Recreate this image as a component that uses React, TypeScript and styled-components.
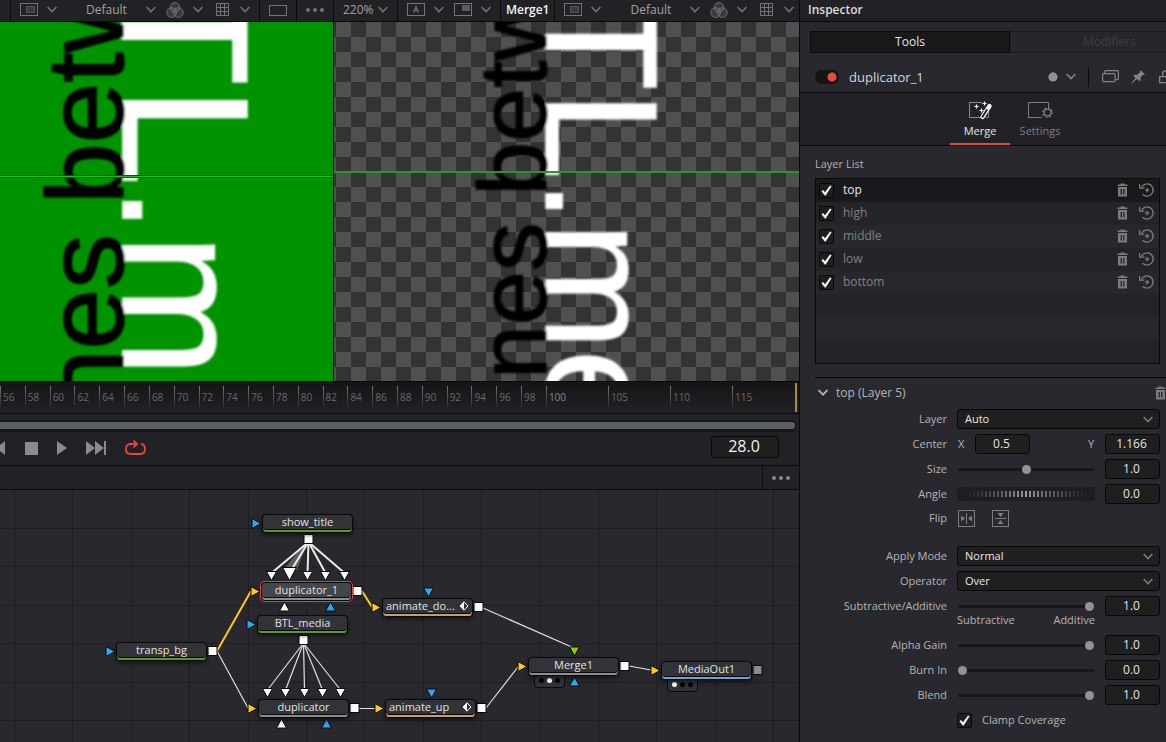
import React from "react";
import styled, { createGlobalStyle, css } from "styled-components";

const GlobalStyle = createGlobalStyle`
  *, *::before, *::after { box-sizing: border-box; }
  html, body { margin: 0; padding: 0; background: #28282e; }
  body {
    font-family: "Open Sans", "Noto Sans", sans-serif;
    font-size: 12px;
    line-height: 16px;
    color: #b4b4b6;
    overflow: hidden;
  }
  button, input, select { font: inherit; color: inherit; margin: 0; padding: 0; border: 0; background: none; }
  h1, h2, h3, p, ul { margin: 0; padding: 0; font: inherit; list-style: none; }
  svg { display: block; flex: none; }
`;

const line = "#0a0a0c";
const barBg = "#212126";

/* ---------- page ---------- */

const Page = styled.div`
  display: flex;
  height: 100vh;
`;
const Workspace = styled.main`
  flex: 1;
  min-width: 0;
  display: flex;
  flex-direction: column;
  background: ${barBg};
  border-right: 1px solid ${line};
`;

/* ---------- viewers ---------- */

const Viewers = styled.div`
  flex: 381 1 0;
  min-height: 0;
  display: grid;
  grid-template-columns: 5fr 7fr;
  border-bottom: 1px solid ${line};
`;
const Viewer = styled.section<{ $divided?: boolean }>`
  min-width: 0;
  display: flex;
  flex-direction: column;
  overflow: hidden;
  border-left: ${(p) => (p.$divided ? `1px solid ${line}` : "0")};
`;
const Toolbar = styled.div`
  display: flex;
  flex: none;
  height: 22px;
  background: ${barBg};
  border-bottom: 1px solid ${line};
  color: #a2a2a4;
`;
const Group = styled.div<{ $pad?: number; $grow?: boolean; $last?: boolean }>`
  display: flex;
  align-items: center;
  justify-content: ${(p) => (p.$grow ? "center" : "flex-start")};
  flex: ${(p) => (p.$grow ? "1" : "none")};
  gap: 10px;
  padding: 0 ${(p) => p.$pad ?? 9}px 2px;
  border-right: ${(p) => (p.$last ? "0" : `1px solid ${line}`)};
`;
const IconButton = styled.button`
  display: flex;
  align-items: center;
  gap: 9px;
  color: #747476;
`;
const ViewName = styled.span`
  font-weight: 600;
  color: #f6f6f6;
`;
const PickBox = styled.span<{ $w: number; $indent?: boolean }>`
  display: grid;
  align-items: center;
  width: ${(p) => p.$w}px;
  margin-left: ${(p) => (p.$indent ? 19 : 0)}px;
  select { grid-area: 1 / 1; appearance: none; outline: none; height: 18px; }
  svg { grid-area: 1 / 1; justify-self: end; pointer-events: none; color: #747476; }
`;
const Screen = styled.div<{ $checker?: boolean }>`
  flex: 1;
  min-height: 0;
  overflow: hidden;
  background: #009300;
  ${(p) =>
    p.$checker &&
    css`
      background: conic-gradient(#333 25%, #505050 0 50%, #333 0 75%, #505050 0) 2px 0 / 30px 30px;
    `}
`;
const Picture = styled.svg`
  width: 100%;
  height: 100%;
  font-family: "Liberation Sans", Arial, sans-serif;
`;

/* ---------- timeline ---------- */

const Ruler = styled.div`
  position: relative;
  display: flex;
  flex: none;
  height: 32px;
  padding-top: 4px;
  background: linear-gradient(#151517, #222226);
  border-bottom: 1px solid ${line};
  overflow: hidden;
`;
const Tick = styled.div<{ $span: number; $lit?: boolean }>`
  flex: ${(p) => p.$span} 0 0;
  min-width: 0;
  display: flex;
  gap: 2px;
  font-size: 10px;
  line-height: 22px;
  color: ${(p) => (p.$lit ? "#8a8a8c" : "#68686a")};
  &::before {
    content: "";
    width: 1px;
    height: 23px;
    background: linear-gradient(#77777a, #222226);
  }
`;
const EndMark = styled.i`
  position: absolute;
  right: 2px;
  top: 1px;
  width: 2px;
  height: 29px;
  background: #b58a22;
`;
const ScrollTrack = styled.div`
  flex: none;
  margin: 6px 2px 0 0;
  height: 12px;
  padding: 2px 2px 3px 0;
  background: #161718;
  border-radius: 0 6px 6px 0;
`;
const ScrollThumb = styled.div`
  height: 7px;
  border-radius: 0 4px 4px 0;
  background: #5b6067;
`;
const Transport = styled.div`
  display: flex;
  align-items: center;
  flex: none;
  height: 34px;
  padding: 0 20px 1px 0;
  border-bottom: 1px solid ${line};
  color: #8b8b8b;
`;
const TransportButtons = styled.div`
  display: flex;
  align-items: center;
  gap: 19px;
  flex: 1;
  button { display: block; }
`;
const FrameBox = styled.input`
  width: 68px;
  height: 22px;
  margin-bottom: 2px;
  padding: 0 2px 2px 0;
  border: 1px solid #08080a;
  border-radius: 3px;
  background: #1f1f1f;
  color: #f0f0f0;
  font-size: 16px;
  text-align: center;
`;

/* ---------- node editor ---------- */

const NodeBar = styled.div`
  display: flex;
  justify-content: flex-end;
  flex: none;
  height: 24px;
  border-bottom: 1px solid ${line};
`;
const NodeMenu = styled.button`
  width: 37px;
  border-left: 1px solid ${line};
  display: grid;
  place-items: center;
  color: #8a8a8c;
`;
const Canvas = styled.section`
  position: relative;
  flex: 252 1 0;
  min-height: 0;
  overflow: hidden;
  background: #28282d;
`;
const Wires = styled.svg`
  width: 100%;
  height: 100%;
`;
const Node = styled.div<{ $x: number; $y: number; $stripe: string; $selected?: boolean; $keyed?: boolean }>`
  position: absolute;
  left: ${(p) => p.$x}px;
  top: ${(p) => p.$y}px;
  width: 91px;
  height: 19px;
  display: flex;
  align-items: center;
  justify-content: ${(p) => (p.$keyed ? "space-between" : "center")};
  padding: 0 3px 5px;
  border: 1px solid ${line};
  border-bottom: 0;
  border-radius: 4px;
  background: ${(p) => (p.$selected ? "#43464b" : "#313338")};
  box-shadow: ${(p) => (p.$selected ? "0 0 0 1px #d9483c" : "0 2px 4px #0008")},
    inset 0 -1px 0 ${line}, inset 0 -3px 0 ${(p) => p.$stripe}, inset 0 -4px 0 ${line};
  font-size: 11px;
  line-height: 14px;
  color: #e2e2e2;
`;
const ViewDots = styled.div<{ $x: number; $y: number }>`
  position: absolute;
  left: ${(p) => p.$x}px;
  top: ${(p) => p.$y}px;
  display: flex;
  gap: 3px;
  padding: 3px 4px 4px;
  border: 1px solid ${line};
  border-top: 0;
  border-radius: 0 0 4px 4px;
  background: #303237;
`;
const ViewDot = styled.i<{ $on?: boolean }>`
  width: 5px;
  height: 5px;
  border-radius: 50%;
  background: ${(p) => (p.$on ? "#fff" : "#000")};
`;

/* ---------- inspector ---------- */

const Inspector = styled.aside`
  width: 366px;
  flex: none;
  overflow: hidden;
  background: #28282e;
`;
const Wide = styled.div`
  width: 420px;
`;
const Title = styled.h1`
  height: 22px;
  padding: 2px 8px 0;
  background: ${barBg};
  border-bottom: 1px solid ${line};
  color: #dcdcdc;
  font-weight: 600;
`;
const Modes = styled.div`
  display: grid;
  grid-template-columns: 1fr 1fr;
  padding: 9px 10px 0;
`;
const Mode = styled.button<{ $on?: boolean }>`
  height: 22px;
  border: 1px solid ${(p) => (p.$on ? line : "#1b1b1f")};
  border-left-width: ${(p) => (p.$on ? 1 : 0)}px;
  background: ${(p) => (p.$on ? "#18191b" : "#26262b")};
  color: ${(p) => (p.$on ? "#e4e4e4" : "#3f3f43")};
`;
const ToolHead = styled.div`
  display: flex;
  align-items: center;
  height: 40px;
  padding: 8px 0 0 15px;
  border-bottom: 1px solid ${line};
  color: #848486;
`;
const Switch = styled.input`
  appearance: none;
  width: 24px;
  height: 14px;
  border-radius: 7px;
  background: #151517 radial-gradient(circle at 17px 7px, #ea4b3d 0 4px, transparent 5px);
`;
const ToolName = styled.h2`
  flex: 1;
  padding-left: 10px;
  font-size: 13px;
  color: #d6d6d6;
`;
const HeadTools = styled.div`
  display: flex;
  align-items: center;
  width: 173px;
  height: 20px;
  button { display: block; }
`;
const Version = styled.button`
  && { display: flex; }
  align-items: center;
  gap: 7px;
  padding-right: 12px;
  margin-right: 13px;
  height: 20px;
  border-right: 1px solid ${line};
`;
const HeadIcons = styled.div`
  display: flex;
  gap: 12px;
`;
const Tabs = styled.div`
  display: flex;
  justify-content: center;
  height: 53px;
  background: #222226;
  border-bottom: 1px solid ${line};
`;
const Tab = styled.button<{ $on?: boolean }>`
  display: flex;
  flex-direction: column;
  align-items: center;
  justify-content: flex-end;
  gap: 3px;
  width: 60px;
  padding-bottom: 4px;
  border-bottom: 2px solid ${(p) => (p.$on ? "#e5483a" : "transparent")};
  font-size: 11px;
  color: ${(p) => (p.$on ? "#e6e6e6" : "#7e7e80")};
`;
const Body = styled.div`
  padding: 10px 6px 0 15px;
`;
const ListTitle = styled.h3`
  font-size: 11px;
  margin-bottom: 6px;
`;
const Layers = styled.ul`
  border: 1px solid ${line};
`;
const LayerRow = styled.li<{ $on?: boolean }>`
  display: flex;
  align-items: center;
  height: 23px;
  padding: 0 5px 0 3px;
  background: ${(p) => (p.$on ? "#18191b" : "#28282c")};
  color: ${(p) => (p.$on ? "#e8e8e8" : "#808082")};
  &:nth-child(even) { background: #242428; }
`;
const LayerLabel = styled.label`
  display: flex;
  align-items: center;
  gap: 9px;
  flex: 1;
`;
const LayerName = styled.span`
  padding-bottom: 2px;
`;
const LayerTools = styled.span`
  display: flex;
  align-items: center;
  gap: 11px;
  padding-bottom: 2px;
  color: #7c7c7e;
`;
const Check = styled.span`
  display: grid;
  place-items: center;
  width: 15px;
  height: 15px;
  input {
    grid-area: 1 / 1;
    appearance: none;
    width: 15px;
    height: 15px;
    border: 1px solid #08080a;
    border-radius: 2px;
    background: #1f1f1f;
  }
  svg { grid-area: 1 / 1; pointer-events: none; }
`;
const SectionHead = styled.div`
  display: flex;
  align-items: center;
  justify-content: space-between;
  height: 32px;
  margin: 13px -6px 0 0;
  padding-bottom: 2px;
  border-top: 1px solid ${line};
  color: #7c7c7e;
`;
const SectionToggle = styled.button`
  display: flex;
  align-items: center;
  gap: 8px;
  padding-left: 3px;
  color: #b4b4b6;
`;
const Field = styled.div<{ $gap?: number }>`
  display: grid;
  grid-template-columns: 1fr 138px 55px;
  align-items: center;
  column-gap: 10px;
  height: 20px;
  margin-bottom: ${(p) => p.$gap ?? 5}px;
  font-size: 11px;
`;
const FieldLabel = styled.label`
  text-align: right;
`;
const Value = styled.input`
  width: 55px;
  height: 20px;
  padding: 0 2px 2px 0;
  border: 1px solid #08080a;
  border-radius: 3px;
  background: #1f1f1f;
  color: #e4e4e4;
  font-size: 12px;
  text-align: center;
`;
const Combo = styled.div`
  grid-column: 2 / 4;
  display: grid;
  align-items: center;
  select {
    grid-area: 1 / 1;
    appearance: none;
    height: 20px;
    padding: 0 7px;
    border: 1px solid #08080a;
    border-radius: 3px;
    background: #1f1f1f;
    color: #e8e8e8;
  }
  svg { grid-area: 1 / 1; justify-self: end; margin-right: 7px; pointer-events: none; color: #7c7c7e; }
`;
const Slider = styled.input`
  appearance: none;
  height: 9px;
  margin: 0 1px;
  background: linear-gradient(#17181a, #17181a) center / 100% 3px no-repeat;
  &::-webkit-slider-thumb {
    appearance: none;
    width: 9px;
    height: 9px;
    border-radius: 50%;
    background: #939393;
  }
`;
const Axes = styled.div`
  display: flex;
  align-items: center;
  gap: 10px;
  padding-left: 1px;
`;
const AxisLabel = styled.label<{ $end?: boolean }>`
  width: 7px;
  margin-left: ${(p) => (p.$end ? "auto" : "0")};
`;
const Flips = styled.div`
  display: flex;
  gap: 17px;
  padding-left: 1px;
  color: #7e7e80;
`;
const Ends = styled.div`
  grid-column: 2;
  display: flex;
  justify-content: space-between;
`;
const Clamp = styled.label`
  display: flex;
  align-items: center;
  gap: 10px;
  padding-left: 142px;
  margin-top: 7px;
  font-size: 11px;
`;

/* ---------- icons ---------- */

const Chevron = ({ s = 1.5 }: { s?: number }) => (
  <svg width="10" height="7" viewBox="0 0 10 7" fill="none" stroke="currentColor" strokeWidth={s}>
    <path d="M.6 1 5 5.6 9.4 1" />
  </svg>
);
const Dots = () => (
  <svg width="18" height="4" viewBox="0 0 18 4" fill="currentColor">
    <circle cx="2" cy="2" r="2" /><circle cx="9" cy="2" r="2" /><circle cx="16" cy="2" r="2" />
  </svg>
);
const Frame = ({ children, y = 0.5, h = 12 }: { children?: React.ReactNode; y?: number; h?: number }) => (
  <svg width="18" height="13" viewBox="0 0 18 13" fill="none" stroke="currentColor">
    <rect x=".5" y={y} width="17" height={h} />
    {children}
  </svg>
);
const Roi = () => (
  <Frame>
    <rect x="6" y="3" width="9" height="7" fill="#3a3a3d" stroke="none" />
    <rect x="6.5" y="3.5" width="8" height="6" strokeDasharray="1 1" />
  </Frame>
);
const BufferA = () => (
  <Frame>
    <path d="m6.5 9.500 2.500-6 2.500 6M7.500 7.500h3" strokeWidth="1.2" />
  </Frame>
);
const SubView = () => (
  <Frame>
    <rect x="8" y="2" width="8" height="6" fill="#5c5c5f" stroke="none" />
  </Frame>
);
const Rgb = () => (
  <svg width="18" height="16" viewBox="0 0 18 16" fill="currentColor" fillOpacity=".3" stroke="currentColor" strokeWidth=".9">
    <circle cx="9" cy="5.3" r="4.8" /><circle cx="5.6" cy="10.6" r="4.8" /><circle cx="12.4" cy="10.6" r="4.8" />
  </svg>
);
const GridIcon = () => (
  <svg width="18" height="13" viewBox="0 0 18 13" fill="none" stroke="currentColor">
    <path d="M3.5.5h12v12h-12zM7.5.5v12M11.5.5v12M3.5 4.5h12M3.5 8.5h12" />
  </svg>
);
const Trash = () => (
  <svg width="11" height="14" viewBox="0 0 11 14" fill="currentColor">
    <path fillRule="evenodd" d="M.5 1.500h3V.500h4v1h3V3H.5zM1 4h9v9.500H1zm2.600 2v5.500h1.300V6zm2.600 0v5.500h1.300V6z" />
  </svg>
);
const Reset = () => (
  <svg width="15" height="14" viewBox="0 0 15 14" fill="none" stroke="currentColor" strokeWidth="1.4">
    <path d="M2.600 4.200A6.100 6.100 0 1 1 3.600 11.200" />
    <path d="M.6 1v4.200h4.800M8.200 5v4.200M6.100 7.100h4.200" strokeWidth="1.300" />
  </svg>
);
const Tickmark = () => (
  <svg width="11" height="11" viewBox="0 0 11 11" fill="#f4f4f4">
    <path d="M.5 6.200 2 5l2 2.300L9 .6l1.600.6L4.700 10.400H3.800z" />
  </svg>
);
const Square = ({ x, y, fill = "#fff" }: { x: number; y: number; fill?: string }) => (
  <rect x={x - 4.5} y={y - 4.5} width="9" height="9" fill={fill} stroke="#08080a" />
);
type Dir = "r" | "d" | "u";
const Arrow = ({ x, y, dir, fill, big }: { x: number; y: number; dir: Dir; fill: string; big?: boolean }) => {
  const a = big ? 7 : 5;
  const b = big ? 6 : 4;
  const pts =
    dir === "r"
      ? `${x - 4},${y - 5} ${x + 5},${y} ${x - 4},${y + 5}`
      : dir === "d"
        ? `${x - a},${y - b} ${x + a},${y - b} ${x},${y + b + 1}`
        : `${x - a},${y + b} ${x + a},${y + b} ${x},${y - b - 1}`;
  return <polygon points={pts} fill={fill} stroke="#08080a" />;
};
const Keyframe = () => (
  <svg width="10" height="10" viewBox="0 0 10 10">
    <path d="M5 .8v8.400L1 5z" fill="#fff" />
    <path d="M5 .8 9 5 5 9.200 1 5z" fill="none" stroke="#fff" />
  </svg>
);

/* ---------- parts ---------- */

const Pick = ({ label, value, w, indent }: { label: string; value: string; w: number; indent?: boolean }) => (
  <PickBox $w={w} $indent={indent}>
    <select aria-label={label} defaultValue={value}><option>{value}</option></select>
    <Chevron />
  </PickBox>
);
const ToolMenu = ({ label, icon }: { label: string; icon: React.ReactNode }) => (
  <IconButton aria-label={label}>{icon}<Chevron /></IconButton>
);
const ViewTools = ({ last }: { last?: boolean }) => (
  <Group $last={last}>
    <ToolMenu label="Region of interest" icon={<Roi />} />
    <Pick label="View layout" value="Default" w={70} indent />
    <ToolMenu label="Channels" icon={<Rgb />} />
    <ToolMenu label="Guides" icon={<GridIcon />} />
  </Group>
);
const CheckBox = () => (
  <Check><input type="checkbox" defaultChecked /><Tickmark /></Check>
);
const SelectField = ({ id, label, value, gap }: { id: string; label: string; value: string; gap?: number }) => (
  <Field $gap={gap}>
    <FieldLabel htmlFor={id}>{label}</FieldLabel>
    <Combo><select id={id} defaultValue={value}><option>{value}</option></select><Chevron /></Combo>
  </Field>
);
const SliderField = ({ id, label, value, at, gap }: { id: string; label: string; value: string; at: number; gap?: number }) => (
  <Field $gap={gap}>
    <FieldLabel htmlFor={id}>{label}</FieldLabel>
    <Slider id={id} type="range" min={0} max={100} defaultValue={at} />
    <Value aria-label={`${label} value`} defaultValue={value} />
  </Field>
);
const Wheel = () => (
  <svg width="138" height="14" viewBox="0 0 138 14" role="img" aria-label="Angle wheel">
    <defs>
      <linearGradient id="wheel"><stop stopColor="#1c1d1f" /><stop offset=".5" stopColor="#202123" /><stop offset="1" stopColor="#1c1d1f" /></linearGradient>
    </defs>
    <rect width="138" height="14" fill="url(#wheel)" />
    {Array.from({ length: 33 }, (_, i) => {
      const d = Math.abs(i - 16) / 16;
      return <rect key={i} x={4 + i * 4} y="4" width="2" height="6" fill="#9a9a9a" opacity={Math.max(0.03, Math.pow(1 - d, 1.3))} />;
    })}
  </svg>
);

const ticks = Array.from({ length: 22 }, (_, i) => 56 + i * 2);
const nodes = [
  { name: "show_title", x: 262, y: 24, stripe: "#5c9a20" },
  { name: "duplicator_1", x: 261, y: 92, stripe: "#8e8e8e", selected: true },
  { name: "BTL_media", x: 257, y: 125, stripe: "#5c9a20" },
  { name: "transp_bg", x: 116, y: 152, stripe: "#5c9a20" },
  { name: "duplicator", x: 258, y: 209, stripe: "#8e8e8e" },
  { name: "animate_do...", x: 382, y: 108, stripe: "#c9a06c", keyed: true },
  { name: "animate_up", x: 385, y: 209, stripe: "#c9a06c", keyed: true },
  { name: "Merge1", x: 528, y: 167, stripe: "#8e8e8e" },
  { name: "MediaOut1", x: 661, y: 171, stripe: "#6ea3d4" },
];
const blue = "#27aaf5";
const yellow = "#fdc818";
const topInputs = [271.5, 289.5, 307.5, 325.5, 344.5];
const lowInputs = [267.5, 285.5, 304.5, 322.5, 340.5];
const layers = ["top", "high", "middle", "low", "bottom", "", "", ""];

export default function App() {
  return (
    <Page>
      <GlobalStyle />
      <Workspace>
        <Viewers>
          <Viewer>
            <Toolbar>
              <Group $pad={5} />
              <ViewTools />
              <Group><IconButton aria-label="Single view"><Frame y={2.5} h={10} /></IconButton></Group>
              <Group $grow $last $pad={0}><IconButton aria-label="Viewer options"><Dots /></IconButton></Group>
            </Toolbar>
            <Screen>
              <Picture>
                <defs><filter id="soft"><feGaussianBlur stdDeviation=".8" /></filter></defs>
                <g filter="url(#soft)" strokeWidth="1.5">
                  <text transform="translate(123 -46) rotate(90)" fontSize="180" fill="#fff" stroke="#fff">
                    TL<tspan fontSize="172">.m</tspan>
                  </text>
                  <text transform="translate(123 388) rotate(-90)" fontSize="109" stroke="#000">nes betw</text>
                </g>
                <path d="M0 153.500h2000M0 155.500h2000" stroke="#005c00" />
                <path d="M0 154.500h2000" stroke="#16c416" />
              </Picture>
            </Screen>
          </Viewer>
          <Viewer $divided>
            <Toolbar>
              <Group><Pick label="Zoom" value="220%" w={45} /></Group>
              <Group>
                <ToolMenu label="Buffer A" icon={<BufferA />} />
                <ToolMenu label="Sub view" icon={<SubView />} />
              </Group>
              <Group $pad={5}><ViewName>Merge1</ViewName></Group>
              <ViewTools last />
            </Toolbar>
            <Screen $checker>
              <Picture>
                <g filter="url(#soft)" strokeWidth="1.3">
                  <text transform="translate(212 -29) rotate(90)" fontSize="160" fill="#fff" stroke="#fff">
                    TL<tspan fontSize="153">.me</tspan>
                  </text>
                  <text transform="translate(212 357) rotate(-90)" fontSize="97" stroke="#000">nes betw</text>
                </g>
                <path d="M0 150h2000" stroke="#249a24" strokeWidth="2" />
              </Picture>
            </Screen>
          </Viewer>
        </Viewers>

        <Ruler>
          {ticks.map((t) => <Tick key={t} $span={20}>{t}</Tick>)}
          <Tick $span={50} $lit>100</Tick>
          <Tick $span={50}>105</Tick>
          <Tick $span={50}>110</Tick>
          <Tick $span={54}>115</Tick>
          <EndMark />
        </Ruler>
        <ScrollTrack><ScrollThumb /></ScrollTrack>
        <Transport>
          <TransportButtons>
            <button aria-label="Play reverse"><svg width="6" height="14" fill="currentColor"><path d="M5 0v14L-4 7z" /></svg></button>
            <button aria-label="Stop"><svg width="13" height="13" fill="currentColor"><path d="M0 0h13v13H0z" /></svg></button>
            <button aria-label="Play"><svg width="10" height="14" fill="currentColor"><path d="M0 0v14l10-7z" /></svg></button>
            <button aria-label="Last frame"><svg width="20" height="14" fill="currentColor"><path d="M0 0v14l9-7zM9 0v14l9-7zM18 0h2v14h-2z" /></svg></button>
            <button aria-label="Loop">
              <svg width="21" height="16" viewBox="0 0 21 16" fill="none" stroke="#e5483a" strokeWidth="1.800">
                <path d="M5.500 4C2.600 4 1 6 1 9s1.600 5 4.500 5h10c2.900 0 4.500-2 4.500-5s-1.400-4.800-4-5M4.500 4h7.500M8.500.6 12 4 8.500 7.400" />
              </svg>
            </button>
          </TransportButtons>
          <FrameBox aria-label="Current frame" defaultValue="28.0" />
        </Transport>
        <NodeBar><NodeMenu aria-label="Node options"><Dots /></NodeMenu></NodeBar>

        <Canvas>
          <Wires>
            <g stroke="#1f1f23">
              {Array.from({ length: 30 }, (_, i) => Math.round(14 + i * 58.4) + 0.5).map((x) => <path key={x} d={`M${x} 0v2000`} />)}
              {Array.from({ length: 30 }, (_, i) => Math.round(38 + i * 38.4) + 0.5).map((y) => <path key={y} d={`M0 ${y}h3000`} />)}
            </g>
            <path d="M308 50 283 80h14z" fill="#fff" opacity=".25" />
            <g stroke="#ececec" strokeWidth="2">
              {topInputs.map((x) => <path key={x} d={`M308.500 52 ${x} 83`} />)}
            </g>
            <g stroke="#e0e0e0" strokeWidth="1.200" fill="none">
              {lowInputs.map((x) => <path key={x} d={`M303.500 153 ${x} 200`} />)}
              <path d="m217 161 31 57M358 218.500h18M483 118l91 40M486 218l32-41M629 176l22 4" />
            </g>
            <path d="m217 161 34-60M362 101l10 16" stroke={yellow} strokeWidth="2" />
            {topInputs.map((x, i) => <Arrow key={x} x={x} y={i === 1 ? 83.5 : 85.5} dir="d" fill="#fff" big={i === 1} />)}
            {lowInputs.map((x) => <Arrow key={x} x={x} y={202.5} dir="d" fill="#fff" />)}
            <Arrow x={284.5} y={117} dir="u" fill="#fff" />
            <Arrow x={330.5} y={117} dir="u" fill={blue} />
            <Arrow x={281.5} y={234} dir="u" fill="#fff" />
            <Arrow x={326.5} y={234} dir="u" fill={blue} />
            <Arrow x={428.5} y={102} dir="d" fill={blue} />
            <Arrow x={431.5} y={203} dir="d" fill={blue} />
            <Arrow x={574.5} y={161} dir="d" fill="#8ccc00" />
            <Arrow x={574.5} y={192} dir="u" fill={blue} />
            <Arrow x={256} y={33.5} dir="r" fill={blue} />
            <Arrow x={251} y={134.5} dir="r" fill={blue} />
            <Arrow x={110} y={161.5} dir="r" fill={blue} />
            <Arrow x={255} y={101.5} dir="r" fill={yellow} />
            <Arrow x={376} y={117.5} dir="r" fill={yellow} />
            <Arrow x={252} y={218.5} dir="r" fill={yellow} />
            <Arrow x={379} y={218.5} dir="r" fill={yellow} />
            <Arrow x={522} y={176.5} dir="r" fill={yellow} />
            <Arrow x={655} y={180.5} dir="r" fill={yellow} />
            <Square x={308.5} y={49} /><Square x={357.5} y={101} /><Square x={303.5} y={150} />
            <Square x={212.5} y={161} /><Square x={354.5} y={218} /><Square x={478.5} y={117} />
            <Square x={481.5} y={218} /><Square x={624.5} y={176} />
            <Square x={757.5} y={180} fill="#8c8c8c" />
          </Wires>
          <ViewDots $x={534} $y={185}><ViewDot /><ViewDot $on /><ViewDot /></ViewDots>
          <ViewDots $x={667} $y={189}><ViewDot $on /><ViewDot /><ViewDot /></ViewDots>
          {nodes.map((n) => (
            <Node key={n.name} $x={n.x} $y={n.y} $stripe={n.stripe} $selected={n.selected} $keyed={n.keyed}>
              {n.name}
              {n.keyed && <Keyframe />}
            </Node>
          ))}
        </Canvas>
      </Workspace>

      <Inspector>
        <Title>Inspector</Title>
        <Wide>
          <Modes><Mode $on>Tools</Mode><Mode>Modifiers</Mode></Modes>
          <ToolHead>
            <Switch type="checkbox" defaultChecked aria-label="Enable duplicator_1" />
            <ToolName>duplicator_1</ToolName>
            <HeadTools>
              <Version aria-label="Versions">
                <svg width="12" height="12"><circle cx="6" cy="6" r="5.500" fill="#1b1b1e" /><circle cx="6" cy="6" r="4.700" fill="#929292" /></svg>
                <Chevron />
              </Version>
              <HeadIcons>
                <button aria-label="Copy"><svg width="17" height="13" viewBox="0 0 17 13" fill="none" stroke="currentColor" strokeWidth="1.200"><rect x=".6" y="3.600" width="12.500" height="8" rx="1" /><path d="M2.600 3.400V1.600q0-1 1-1h11.800q1 0 1 1v7q0 1-1 1h-2" /></svg></button>
                <button aria-label="Pin"><svg width="15" height="14" viewBox="0 0 15 14" fill="currentColor"><path d="M9.600.2 14 4.400l-1.300.6-.7-.2-2.500 2.600.2 2.700-1.100 1.200-2.500-2.400L.6 13.600l-.5-.4L4.600 8 2.400 5.800l1.100-1.100 2.900.1L9 2.200 8.900 1.300z" /></svg></button>
                <button aria-label="Lock"><svg width="14" height="14" viewBox="0 0 14 14" fill="none" stroke="currentColor" strokeWidth="1.300"><path d="M1.600 6.600h10v6h-10zM4.600 6.600V3.400a2.500 2.500 0 0 1 5 0" /></svg></button>
              </HeadIcons>
            </HeadTools>
          </ToolHead>
          <Tabs>
            <Tab $on>
              <svg width="24" height="20" viewBox="0 0 24 20" fill="none">
                <path d="M14 2.500H1.500v15h12M20.500 10v7.500h-3" stroke="#8a8a8c" />
                <path d="m14.500 17 7-11" stroke="#fff" strokeWidth="4.200" strokeLinecap="round" />
                <path d="m14.500 16.800 4.300-6.800" stroke="#222226" strokeWidth="2" strokeLinecap="round" />
                <path d="M8.500 4.500v4M6.500 6.500h4M13.500 8.500v4M11.500 10.500h4M16.500 1.500v4M14.500 3.500h4" stroke="#fff" strokeWidth="1.200" />
              </svg>
              Merge
            </Tab>
            <Tab>
              <svg width="26" height="20" viewBox="0 0 26 20" fill="none" stroke="#7e7e80">
                <path d="M21.500 7V2.500h-20v15h13" />
                <circle cx="20.500" cy="12.500" r="3.400" strokeWidth="1.300" />
                <circle cx="20.500" cy="12.500" r="4.700" strokeWidth="1.500" strokeDasharray="1.700 2" />
              </svg>
              Settings
            </Tab>
          </Tabs>
        </Wide>
        <Body>
          <ListTitle>Layer List</ListTitle>
          <Layers>
            {layers.map((name, i) => (
              <LayerRow key={i} $on={i === 0}>
                {name && (
                  <>
                    <LayerLabel><CheckBox /><LayerName>{name}</LayerName></LayerLabel>
                    <LayerTools>
                      <button aria-label={`Delete ${name}`}><Trash /></button>
                      <button aria-label={`Reset ${name}`}><Reset /></button>
                    </LayerTools>
                  </>
                )}
              </LayerRow>
            ))}
          </Layers>
          <SectionHead>
            <SectionToggle><Chevron s={1.8} />top (Layer 5)</SectionToggle>
            <button aria-label="Delete layer"><Trash /></button>
          </SectionHead>
          <SelectField id="layer" label="Layer" value="Auto" />
          <Field>
            <FieldLabel as="span">Center</FieldLabel>
            <Axes>
              <AxisLabel htmlFor="cx">X</AxisLabel>
              <Value id="cx" defaultValue="0.5" />
              <AxisLabel $end htmlFor="cy">Y</AxisLabel>
            </Axes>
            <Value id="cy" defaultValue="1.166" />
          </Field>
          <SliderField id="size" label="Size" value="1.0" at={50} />
          <Field $gap={4}>
            <FieldLabel htmlFor="angle">Angle</FieldLabel>
            <Wheel />
            <Value id="angle" defaultValue="0.0" />
          </Field>
          <Field $gap={18}>
            <FieldLabel as="span">Flip</FieldLabel>
            <Flips>
              <button aria-label="Flip horizontally">
                <svg width="17" height="17" fill="none" stroke="currentColor"><rect x=".5" y=".5" width="16" height="16" /><path d="M8.500 3v11" /><path d="M3 5.500v6l4-3zM14 5.500v6l-4-3z" fill="currentColor" stroke="none" /></svg>
              </button>
              <button aria-label="Flip vertically">
                <svg width="17" height="17" fill="none" stroke="currentColor"><rect x=".5" y=".5" width="16" height="16" /><path d="M3 8.500h11" /><path d="M5.500 3h6l-3 4zM5.500 14h6l-3-4z" fill="currentColor" stroke="none" /></svg>
              </button>
            </Flips>
          </Field>
          <SelectField id="apply" label="Apply Mode" value="Normal" />
          <SelectField id="operator" label="Operator" value="Over" />
          <SliderField id="subadd" label="Subtractive/Additive" value="1.0" at={100} gap={-6} />
          <Field><Ends><span>Subtractive</span><span>Additive</span></Ends></Field>
          <SliderField id="alpha" label="Alpha Gain" value="1.0" at={100} />
          <SliderField id="burn" label="Burn In" value="0.0" at={0} />
          <SliderField id="blend" label="Blend" value="1.0" at={100} />
          <Clamp><CheckBox />Clamp Coverage</Clamp>
        </Body>
      </Inspector>
    </Page>
  );
}
